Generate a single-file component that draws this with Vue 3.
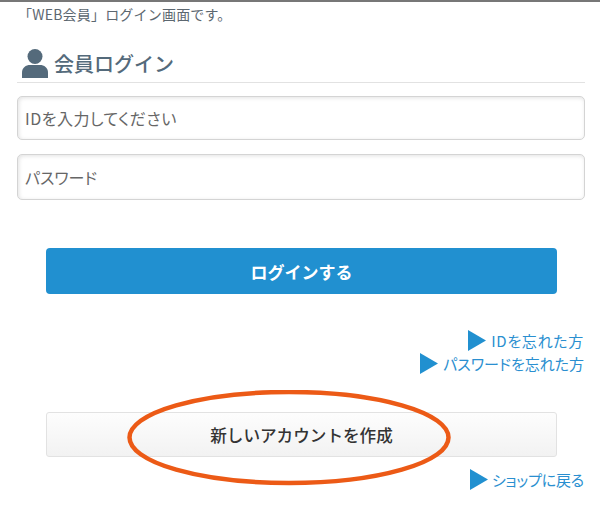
<script setup>
const links = [
  { text: 'IDを忘れた方', cls: 'wide' },
  { text: 'パスワードを忘れた方', cls: '' },
]
</script>

<template>
  <div class="page">
    <p class="intro">「WEB会員」ログイン画面です。</p>
    <h1 class="heading">
      <svg class="user" viewBox="0 0 26 29" width="26" height="29">
        <circle cx="13" cy="7.5" r="7.5" fill="#546a7b" />
        <path d="M0 29V23.5C0 18.5 4 16 8 16H18C22 16 26 18.5 26 23.5V29Z" fill="#546a7b" />
      </svg>
      <span>会員ログイン</span>
    </h1>
    <div class="field first">IDを入力してください</div>
    <div class="field second">パスワード</div>
    <button class="login">ログインする</button>
    <div class="links">
      <a v-for="l in links" :key="l.text" class="link" :class="l.cls">
        <svg class="tri" viewBox="0 0 18 21" width="18" height="21"><path d="M0 0L18 10.5L0 21Z" fill="#2190d0" /></svg>
        <span>{{ l.text }}</span>
      </a>
    </div>
    <div class="create-wrap">
      <button class="create">新しいアカウントを作成</button>
      <svg class="ring" viewBox="0 0 324 96" width="324" height="96">
        <ellipse cx="162" cy="47.5" rx="159.5" ry="45.5" fill="none" stroke="#ec5a16" stroke-width="4.5" />
      </svg>
    </div>
    <div class="links back">
      <a class="link">
        <svg class="tri" viewBox="0 0 18 21" width="18" height="21"><path d="M0 0L18 10.5L0 21Z" fill="#2190d0" /></svg>
        <span>ショップに戻る</span>
      </a>
    </div>
  </div>
</template>

<style>
html, body { margin: 0; background: #fff; }
</style>

<style scoped>
.page {
  width: 600px;
  height: 506px;
  box-sizing: border-box;
  border-top: 2px solid #777;
  padding: 0 15px 0 17px;
  overflow: hidden;
  font-family: "Noto Sans CJK JP", "Liberation Sans", sans-serif;
  color: #5a6a75;
}
.intro { margin: 2px 0 0; padding-left: 1px; font-size: 14px; letter-spacing: .2px; line-height: 20px; color: #5c6770; }
.heading {
  display: flex;
  align-items: center;
  gap: 6px;
  margin: 23px 0 0;
  padding: 0 0 3px 5px;
  height: 32px;
  border-bottom: 1px solid #e2e2e2;
  font-size: 20px;
  font-weight: 500;
  color: #546a7b;
}
.field {
  height: 44px;
  margin-top: 13px;
  box-sizing: border-box;
  padding-left: 7px;
  border: 1px solid #d4d4d4;
  border-radius: 5px;
  box-shadow: inset 1px 1px 4px rgba(0,0,0,.12);
  display: flex;
  align-items: center;
  font-size: 16px;
  font-feature-settings: "palt";
  color: #666;
}
.field.first { letter-spacing: .5px; }
.field.second { margin-top: 14px; height: 46px; padding-bottom: 1px; }
button { display: block; font-family: inherit; padding: 0; cursor: pointer; }
.login {
  width: 511px;
  height: 46px;
  margin: 48px 0 0 29px;
  border: none;
  border-radius: 4px;
  background: #2190d0;
  color: #fff;
  font-size: 17px;
  font-weight: 700;
}
.links { display: flex; flex-direction: column; align-items: flex-end; margin: 35px 1px 0 0; }
.link { display: flex; align-items: center; gap: 5px; height: 23px; color: #2a8fd0; font-size: 15px; font-feature-settings: "palt"; }
.link.wide { letter-spacing: .7px; }
.back .link { gap: 4px; letter-spacing: -.2px; }
.create-wrap { position: relative; margin: 37px 0 0 29px; width: 511px; }
.create {
  width: 511px;
  height: 45px;
  border: 1px solid #e2e2e2;
  border-radius: 3px;
  background: linear-gradient(#fdfdfd, #f2f2f2);
  color: #333;
  font-size: 16.6px;
  font-weight: 500;
}
.ring { position: absolute; left: 81px; top: -22px; pointer-events: none; }
.links.back { margin-top: 11px; }
</style>
